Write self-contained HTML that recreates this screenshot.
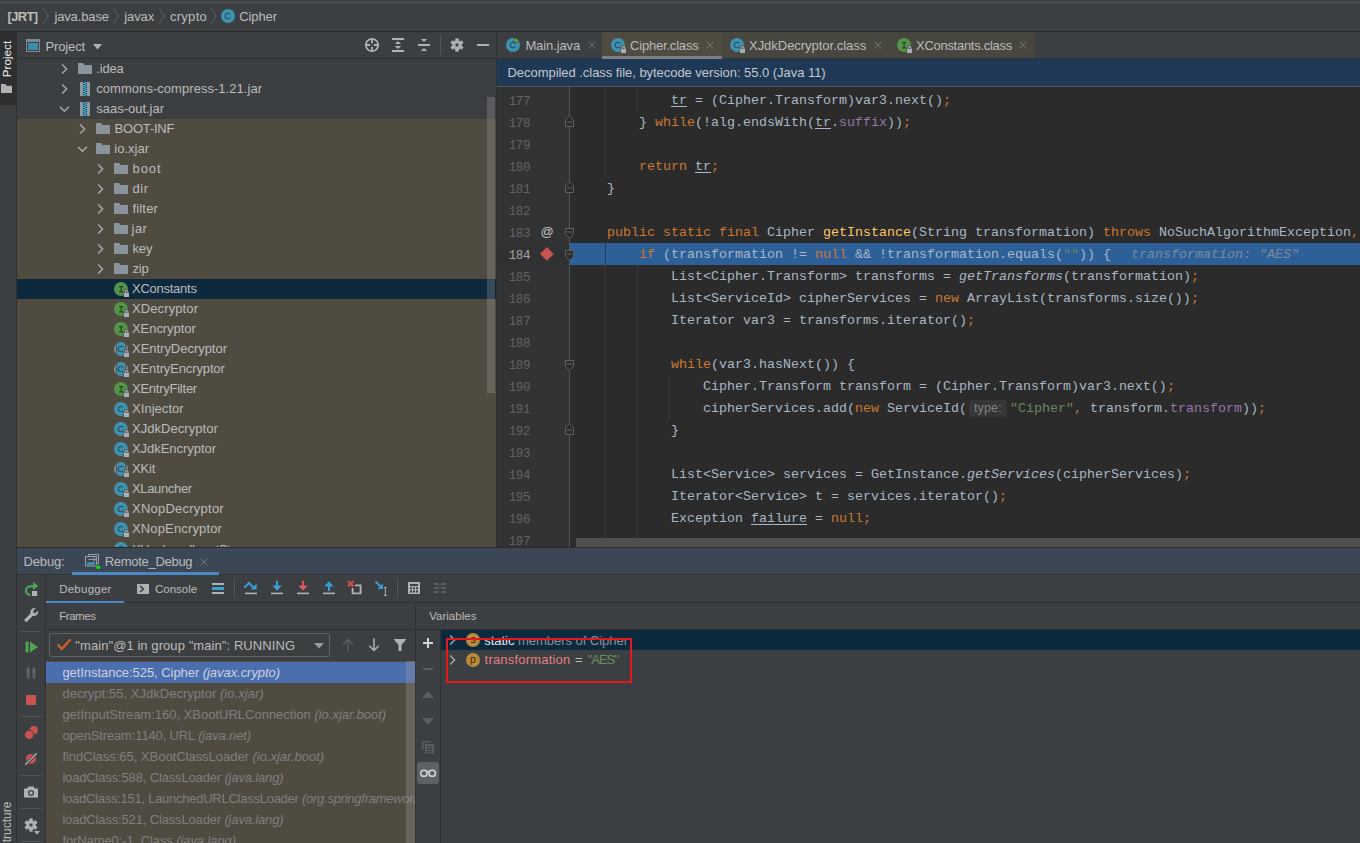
<!DOCTYPE html>
<html><head><meta charset="utf-8"><title>Cipher.class</title>
<style>
html,body{margin:0;padding:0;background:#3c3f41;}
body{width:1360px;height:843px;position:relative;overflow:hidden;font-family:"Liberation Sans",sans-serif;font-size:13px;color:#bbbbbb;}
.t{position:absolute;white-space:pre;}
.b{font-weight:bold;}
.i{font-style:italic;}
.m{font-family:"Liberation Mono",monospace;font-size:13.333px;}
.ab{position:absolute;}
svg{position:absolute;overflow:visible;}
.code{position:absolute;left:575px;white-space:pre;font-family:"Liberation Mono",monospace;font-size:13.333px;height:22px;line-height:22px;color:#a9b7c6;}
.k{color:#cc7832;}.f{color:#9876aa;}.s{color:#6a8759;}.d{color:#ffc66d;}.u{text-decoration:underline;text-underline-offset:2px;}
.ln{position:absolute;left:497px;width:33px;text-align:right;font-family:"Liberation Mono",monospace;font-size:12.5px;letter-spacing:-0.4px;height:22px;line-height:22px;color:#606366;}
.fr{color:#7f7f7f;}
.hint{display:inline-block;height:17px;line-height:17px;vertical-align:0px;margin:0 3px 0 2px;width:38px;text-align:center;border-radius:3px;background:#353637;color:#808284;font-family:"Liberation Sans",sans-serif;font-size:12.5px;letter-spacing:0.15px;}
</style></head><body>

<div style="position:absolute;left:0px;top:2px;width:1360px;height:1px;background:#555555;"></div>
<div style="position:absolute;left:0px;top:31px;width:1360px;height:1px;background:#2b2b2b;"></div>
<span id="t1" class="t b" style="left:7.5px;top:3px;height:28px;line-height:28px;letter-spacing:-0.630px;">[JRT]</span>
<span id="t2" class="t " style="left:54.4px;top:3px;height:28px;line-height:28px;letter-spacing:-0.132px;">java.base</span>
<span id="t3" class="t " style="left:124.3px;top:3px;height:28px;line-height:28px;letter-spacing:-0.115px;">javax</span>
<span id="t4" class="t " style="left:169.9px;top:3px;height:28px;line-height:28px;letter-spacing:0.299px;">crypto</span>
<span id="t5" class="t " style="left:239.3px;top:3px;height:28px;line-height:28px;letter-spacing:-0.119px;">Cipher</span>
<svg style="left:43px;top:8px" width="6" height="16" viewBox="0 0 6 16"><path d="M0.5 0.5L5.5 8L0.5 15.5" fill="none" stroke="#5e6163" stroke-width="1"/></svg>
<svg style="left:113px;top:8px" width="6" height="16" viewBox="0 0 6 16"><path d="M0.5 0.5L5.5 8L0.5 15.5" fill="none" stroke="#5e6163" stroke-width="1"/></svg>
<svg style="left:159px;top:8px" width="6" height="16" viewBox="0 0 6 16"><path d="M0.5 0.5L5.5 8L0.5 15.5" fill="none" stroke="#5e6163" stroke-width="1"/></svg>
<svg style="left:211px;top:8px" width="6" height="16" viewBox="0 0 6 16"><path d="M0.5 0.5L5.5 8L0.5 15.5" fill="none" stroke="#5e6163" stroke-width="1"/></svg>
<svg style="left:220px;top:8px" width="16" height="16" viewBox="0 0 16 16"><circle cx="8" cy="8" r="7" fill="#3f93b0"/><path d="M10.2 9.5a2.75 2.75 0 1 1 0-3" fill="none" stroke="#234a5a" stroke-width="1.15"/></svg>
<div style="position:absolute;left:0px;top:32px;width:16px;height:73px;background:#2d2f30;"></div>
<div style="position:absolute;left:16px;top:32px;width:1px;height:811px;background:#323232;"></div>
<span id="vproj" style="position:absolute;left:6.5px;top:59px;transform:translate(-50%,-50%) rotate(-90deg);white-space:pre;color:#f0f0f0;font-size:11.7px;line-height:16px;">Project</span>
<svg style="left:1px;top:84px" width="11" height="9" viewBox="0 0 11 9"><path d="M0 0h4.2l1.4 1.8h5.4v7.2h-11z" fill="#afb1b3"/></svg>
<span id="vstruct" style="position:absolute;left:7px;top:826px;transform:translate(-50%,-50%) rotate(-90deg);white-space:pre;color:#bbbbbb;font-size:12px;line-height:16px;">Structure</span>
<div style="position:absolute;left:17px;top:58px;width:479px;height:1px;background:#323232;"></div>
<svg style="left:26px;top:39px" width="14" height="13" viewBox="0 0 14 13"><rect x="0.5" y="0.5" width="13" height="12" fill="none" stroke="#7f8b91" stroke-width="1"/><rect x="0" y="0" width="14" height="3" fill="#7f8b91"/><rect x="2" y="4" width="10" height="7" fill="#3a8fae"/></svg>
<span id="t6" class="t " style="left:45.5px;top:33.5px;height:26px;line-height:26px;letter-spacing:-0.128px;">Project</span>
<svg style="left:93px;top:43.5px" width="9" height="6" viewBox="0 0 9 6"><path d="M0 0h9l-4.5 5.5z" fill="#afb1b3"/></svg>
<svg style="left:364px;top:37px" width="16" height="16" viewBox="0 0 16 16"><circle cx="8" cy="8" r="6.2" fill="none" stroke="#afb1b3" stroke-width="1.7"/><path d="M8 1.5v4.7M8 9.8v4.7M1.5 8h4.7M9.8 8h4.7" stroke="#afb1b3" stroke-width="1.8"/></svg>
<svg style="left:390px;top:37px" width="16" height="16" viewBox="0 0 16 16"><path d="M2 1h12v2h-12zM2 13h12v2h-12z" fill="#afb1b3"/><path d="M8 4l3.2 2.9h-6.4zM8 12l3.2-2.9h-6.4z" fill="#afb1b3"/></svg>
<svg style="left:416px;top:37px" width="16" height="16" viewBox="0 0 16 16"><path d="M2 7h12v2h-12z" fill="#afb1b3"/><path d="M8 5l3.2-3h-6.4zM8 11l3.2 3h-6.4z" fill="#afb1b3"/></svg>
<div style="position:absolute;left:440px;top:35px;width:1px;height:20px;background:#555555;"></div>
<svg style="left:449px;top:37px" width="16" height="16" viewBox="0 0 16 16"><path d="M6.38 3.69L6.71 1.63L9.29 1.63L9.62 3.69L10.92 4.44L12.87 3.70L14.16 5.93L12.54 7.25L12.54 8.75L14.16 10.07L12.87 12.30L10.92 11.56L9.62 12.31L9.29 14.37L6.71 14.37L6.38 12.31L5.08 11.56L3.13 12.30L1.84 10.07L3.46 8.75L3.46 7.25L1.84 5.93L3.13 3.70L5.08 4.44Z M8 6.1a1.9 1.9 0 1 0 0 3.8a1.9 1.9 0 1 0 0-3.8z" fill="#afb1b3" fill-rule="evenodd" stroke="#afb1b3" stroke-width="0.6" stroke-linejoin="round"/></svg>
<div style="position:absolute;left:477px;top:44px;width:12px;height:2px;background:#afb1b3;"></div>
<div style="position:absolute;left:17px;top:119px;width:479px;height:428px;background:#4f4b41;"></div>
<div style="position:absolute;left:17px;top:279px;width:479px;height:20px;background:#0d293e;"></div>
<div style="position:absolute;left:487px;top:97px;width:8px;height:296px;background:rgba(166,166,166,0.28);"></div>
<div class="ab" style="left:17px;top:59px;width:479px;height:488px;overflow:hidden;">
<svg style="left:43px;top:3.5px" width="8" height="12" viewBox="0 0 8 12"><path d="M2.2 1.5L6.6 6L2.2 10.5" fill="none" stroke="#a7abae" stroke-width="1.4"/></svg>
<svg style="left:61px;top:4px" width="14" height="11" viewBox="0 0 14 11"><path d="M0 0h5.2l1.3 2h7.5v9h-14z" fill="#8a949c"/></svg>
<span id="t7" class="t " style="left:79.3px;top:0px;height:20px;line-height:20px;letter-spacing:-0.201px;">.idea</span>
<svg style="left:43px;top:23.5px" width="8" height="12" viewBox="0 0 8 12"><path d="M2.2 1.5L6.6 6L2.2 10.5" fill="none" stroke="#a7abae" stroke-width="1.4"/></svg>
<svg style="left:63px;top:23px" width="10" height="14" viewBox="0 0 10 14"><rect x="0" y="0" width="3" height="14" fill="#8e989f"/><rect x="7" y="0" width="3" height="14" fill="#8e989f"/><rect x="3" y="0" width="4" height="14" fill="#35373a"/><rect x="4.4" y="0" width="2.6" height="1" fill="#37a8d4"/><rect x="3" y="1" width="2.6" height="1" fill="#37a8d4"/><rect x="4.4" y="2" width="2.6" height="1" fill="#37a8d4"/><rect x="3" y="3" width="2.6" height="1" fill="#37a8d4"/><rect x="4.4" y="4" width="2.6" height="1" fill="#37a8d4"/><rect x="3" y="5" width="2.6" height="1" fill="#37a8d4"/><rect x="4.4" y="6" width="2.6" height="1" fill="#37a8d4"/><rect x="3" y="7" width="2.6" height="1" fill="#37a8d4"/><rect x="4.4" y="8" width="2.6" height="1" fill="#37a8d4"/><rect x="3" y="9" width="2.6" height="1" fill="#37a8d4"/><rect x="4.4" y="10" width="2.6" height="1" fill="#37a8d4"/><rect x="3" y="11" width="2.6" height="1" fill="#37a8d4"/><rect x="4.4" y="12" width="2.6" height="1" fill="#37a8d4"/><rect x="3" y="13" width="2.6" height="1" fill="#37a8d4"/></svg>
<span id="t8" class="t " style="left:79.3px;top:20px;height:20px;line-height:20px;letter-spacing:0.041px;">commons-compress-1.21.jar</span>
<svg style="left:41px;top:45.5px" width="12" height="8" viewBox="0 0 12 8"><path d="M1.9 1.7L6.4 6.2L10.9 1.7" fill="none" stroke="#a7abae" stroke-width="1.4"/></svg>
<svg style="left:63px;top:43px" width="10" height="14" viewBox="0 0 10 14"><rect x="0" y="0" width="3" height="14" fill="#8e989f"/><rect x="7" y="0" width="3" height="14" fill="#8e989f"/><rect x="3" y="0" width="4" height="14" fill="#35373a"/><rect x="4.4" y="0" width="2.6" height="1" fill="#37a8d4"/><rect x="3" y="1" width="2.6" height="1" fill="#37a8d4"/><rect x="4.4" y="2" width="2.6" height="1" fill="#37a8d4"/><rect x="3" y="3" width="2.6" height="1" fill="#37a8d4"/><rect x="4.4" y="4" width="2.6" height="1" fill="#37a8d4"/><rect x="3" y="5" width="2.6" height="1" fill="#37a8d4"/><rect x="4.4" y="6" width="2.6" height="1" fill="#37a8d4"/><rect x="3" y="7" width="2.6" height="1" fill="#37a8d4"/><rect x="4.4" y="8" width="2.6" height="1" fill="#37a8d4"/><rect x="3" y="9" width="2.6" height="1" fill="#37a8d4"/><rect x="4.4" y="10" width="2.6" height="1" fill="#37a8d4"/><rect x="3" y="11" width="2.6" height="1" fill="#37a8d4"/><rect x="4.4" y="12" width="2.6" height="1" fill="#37a8d4"/><rect x="3" y="13" width="2.6" height="1" fill="#37a8d4"/></svg>
<span id="t9" class="t " style="left:79.3px;top:40px;height:20px;line-height:20px;letter-spacing:-0.020px;">saas-out.jar</span>
<svg style="left:61px;top:63.5px" width="8" height="12" viewBox="0 0 8 12"><path d="M2.2 1.5L6.6 6L2.2 10.5" fill="none" stroke="#a7abae" stroke-width="1.4"/></svg>
<svg style="left:79px;top:64px" width="14" height="11" viewBox="0 0 14 11"><path d="M0 0h5.2l1.3 2h7.5v9h-14z" fill="#8a949c"/></svg>
<span id="t10" class="t " style="left:97.5px;top:60px;height:20px;line-height:20px;letter-spacing:-0.199px;">BOOT-INF</span>
<svg style="left:59px;top:85.5px" width="12" height="8" viewBox="0 0 12 8"><path d="M1.9 1.7L6.4 6.2L10.9 1.7" fill="none" stroke="#a7abae" stroke-width="1.4"/></svg>
<svg style="left:79px;top:84px" width="14" height="11" viewBox="0 0 14 11"><path d="M0 0h5.2l1.3 2h7.5v9h-14z" fill="#8a949c"/></svg>
<span id="t11" class="t " style="left:97.3px;top:80px;height:20px;line-height:20px;letter-spacing:0.019px;">io.xjar</span>
<svg style="left:79px;top:103.5px" width="8" height="12" viewBox="0 0 8 12"><path d="M2.2 1.5L6.6 6L2.2 10.5" fill="none" stroke="#a7abae" stroke-width="1.4"/></svg>
<svg style="left:97px;top:104px" width="14" height="11" viewBox="0 0 14 11"><path d="M0 0h5.2l1.3 2h7.5v9h-14z" fill="#8a949c"/></svg>
<span id="t12" class="t " style="left:115.5px;top:100px;height:20px;line-height:20px;letter-spacing:0.896px;">boot</span>
<svg style="left:79px;top:123.5px" width="8" height="12" viewBox="0 0 8 12"><path d="M2.2 1.5L6.6 6L2.2 10.5" fill="none" stroke="#a7abae" stroke-width="1.4"/></svg>
<svg style="left:97px;top:124px" width="14" height="11" viewBox="0 0 14 11"><path d="M0 0h5.2l1.3 2h7.5v9h-14z" fill="#8a949c"/></svg>
<span id="t13" class="t " style="left:115.4px;top:120px;height:20px;line-height:20px;letter-spacing:0.573px;">dir</span>
<svg style="left:79px;top:143.5px" width="8" height="12" viewBox="0 0 8 12"><path d="M2.2 1.5L6.6 6L2.2 10.5" fill="none" stroke="#a7abae" stroke-width="1.4"/></svg>
<svg style="left:97px;top:144px" width="14" height="11" viewBox="0 0 14 11"><path d="M0 0h5.2l1.3 2h7.5v9h-14z" fill="#8a949c"/></svg>
<span id="t14" class="t " style="left:115.4px;top:140px;height:20px;line-height:20px;letter-spacing:0.188px;">filter</span>
<svg style="left:79px;top:163.5px" width="8" height="12" viewBox="0 0 8 12"><path d="M2.2 1.5L6.6 6L2.2 10.5" fill="none" stroke="#a7abae" stroke-width="1.4"/></svg>
<svg style="left:97px;top:164px" width="14" height="11" viewBox="0 0 14 11"><path d="M0 0h5.2l1.3 2h7.5v9h-14z" fill="#8a949c"/></svg>
<span id="t15" class="t " style="left:114.6px;top:160px;height:20px;line-height:20px;letter-spacing:0.423px;">jar</span>
<svg style="left:79px;top:183.5px" width="8" height="12" viewBox="0 0 8 12"><path d="M2.2 1.5L6.6 6L2.2 10.5" fill="none" stroke="#a7abae" stroke-width="1.4"/></svg>
<svg style="left:97px;top:184px" width="14" height="11" viewBox="0 0 14 11"><path d="M0 0h5.2l1.3 2h7.5v9h-14z" fill="#8a949c"/></svg>
<span id="t16" class="t " style="left:115.4px;top:180px;height:20px;line-height:20px;letter-spacing:-0.117px;">key</span>
<svg style="left:79px;top:203.5px" width="8" height="12" viewBox="0 0 8 12"><path d="M2.2 1.5L6.6 6L2.2 10.5" fill="none" stroke="#a7abae" stroke-width="1.4"/></svg>
<svg style="left:97px;top:204px" width="14" height="11" viewBox="0 0 14 11"><path d="M0 0h5.2l1.3 2h7.5v9h-14z" fill="#8a949c"/></svg>
<span id="t17" class="t " style="left:115.4px;top:200px;height:20px;line-height:20px;letter-spacing:-0.162px;">zip</span>
<svg style="left:96px;top:222px" width="16" height="16" viewBox="0 0 16 16"><circle cx="8" cy="8" r="7" fill="#53934a"/><path d="M6 5.7h4.2M6 10.9h4.2M8.1 5.7v5.2" fill="none" stroke="#27461f" stroke-width="1.2"/><defs><clipPath id="lk1"><circle cx="8" cy="8" r="7"/></clipPath></defs><g clip-path="url(#lk1)"><path d="M12.1 12.4v-1.4a1.4 1.4 0 0 1 2.8 0v1.4" fill="none" stroke="#4b483f" stroke-width="2.6"/><rect x="10.3" y="11.3" width="6.4" height="5.4" fill="#4b483f"/></g><path d="M12.1 12v-1a1.4 1.4 0 0 1 2.8 0v1" fill="none" stroke="#a7b0b8" stroke-width="1.1"/><rect x="11" y="12" width="5" height="4" fill="#a7b0b8"/></svg>
<span id="t18" class="t " style="left:115px;top:220px;height:20px;line-height:20px;letter-spacing:-0.256px;">XConstants</span>
<svg style="left:96px;top:242px" width="16" height="16" viewBox="0 0 16 16"><circle cx="8" cy="8" r="7" fill="#53934a"/><path d="M6 5.7h4.2M6 10.9h4.2M8.1 5.7v5.2" fill="none" stroke="#27461f" stroke-width="1.2"/><defs><clipPath id="lk2"><circle cx="8" cy="8" r="7"/></clipPath></defs><g clip-path="url(#lk2)"><path d="M12.1 12.4v-1.4a1.4 1.4 0 0 1 2.8 0v1.4" fill="none" stroke="#4b483f" stroke-width="2.6"/><rect x="10.3" y="11.3" width="6.4" height="5.4" fill="#4b483f"/></g><path d="M12.1 12v-1a1.4 1.4 0 0 1 2.8 0v1" fill="none" stroke="#a7b0b8" stroke-width="1.1"/><rect x="11" y="12" width="5" height="4" fill="#a7b0b8"/></svg>
<span id="t19" class="t " style="left:115px;top:240px;height:20px;line-height:20px;letter-spacing:0.108px;">XDecryptor</span>
<svg style="left:96px;top:262px" width="16" height="16" viewBox="0 0 16 16"><circle cx="8" cy="8" r="7" fill="#53934a"/><path d="M6 5.7h4.2M6 10.9h4.2M8.1 5.7v5.2" fill="none" stroke="#27461f" stroke-width="1.2"/><defs><clipPath id="lk3"><circle cx="8" cy="8" r="7"/></clipPath></defs><g clip-path="url(#lk3)"><path d="M12.1 12.4v-1.4a1.4 1.4 0 0 1 2.8 0v1.4" fill="none" stroke="#4b483f" stroke-width="2.6"/><rect x="10.3" y="11.3" width="6.4" height="5.4" fill="#4b483f"/></g><path d="M12.1 12v-1a1.4 1.4 0 0 1 2.8 0v1" fill="none" stroke="#a7b0b8" stroke-width="1.1"/><rect x="11" y="12" width="5" height="4" fill="#a7b0b8"/></svg>
<span id="t20" class="t " style="left:115px;top:260px;height:20px;line-height:20px;letter-spacing:-0.057px;">XEncryptor</span>
<svg style="left:96px;top:282px" width="16" height="16" viewBox="0 0 16 16"><defs><clipPath id="ac10690"><rect x="3.8" y="0" width="8.5" height="16"/></clipPath><clipPath id="al10690"><rect x="0" y="0" width="2.7" height="16"/></clipPath><clipPath id="ar10690"><rect x="13.4" y="0" width="2.6" height="16"/></clipPath></defs><circle cx="8" cy="8" r="7" fill="#3f93b0" clip-path="url(#ac10690)"/><circle cx="8" cy="8" r="7" fill="#8f9aa0" clip-path="url(#al10690)"/><circle cx="8" cy="8" r="7" fill="#8f9aa0" clip-path="url(#ar10690)"/><path d="M10.2 9.5a2.75 2.75 0 1 1 0-3" fill="none" stroke="#234a5a" stroke-width="1.15"/><defs><clipPath id="lk4"><circle cx="8" cy="8" r="7"/></clipPath></defs><g clip-path="url(#lk4)"><path d="M12.1 12.4v-1.4a1.4 1.4 0 0 1 2.8 0v1.4" fill="none" stroke="#4b483f" stroke-width="2.6"/><rect x="10.3" y="11.3" width="6.4" height="5.4" fill="#4b483f"/></g><path d="M12.1 12v-1a1.4 1.4 0 0 1 2.8 0v1" fill="none" stroke="#a7b0b8" stroke-width="1.1"/><rect x="11" y="12" width="5" height="4" fill="#a7b0b8"/></svg>
<span id="t21" class="t " style="left:115px;top:280px;height:20px;line-height:20px;letter-spacing:-0.027px;">XEntryDecryptor</span>
<svg style="left:96px;top:302px" width="16" height="16" viewBox="0 0 16 16"><defs><clipPath id="ac10710"><rect x="3.8" y="0" width="8.5" height="16"/></clipPath><clipPath id="al10710"><rect x="0" y="0" width="2.7" height="16"/></clipPath><clipPath id="ar10710"><rect x="13.4" y="0" width="2.6" height="16"/></clipPath></defs><circle cx="8" cy="8" r="7" fill="#3f93b0" clip-path="url(#ac10710)"/><circle cx="8" cy="8" r="7" fill="#8f9aa0" clip-path="url(#al10710)"/><circle cx="8" cy="8" r="7" fill="#8f9aa0" clip-path="url(#ar10710)"/><path d="M10.2 9.5a2.75 2.75 0 1 1 0-3" fill="none" stroke="#234a5a" stroke-width="1.15"/><defs><clipPath id="lk5"><circle cx="8" cy="8" r="7"/></clipPath></defs><g clip-path="url(#lk5)"><path d="M12.1 12.4v-1.4a1.4 1.4 0 0 1 2.8 0v1.4" fill="none" stroke="#4b483f" stroke-width="2.6"/><rect x="10.3" y="11.3" width="6.4" height="5.4" fill="#4b483f"/></g><path d="M12.1 12v-1a1.4 1.4 0 0 1 2.8 0v1" fill="none" stroke="#a7b0b8" stroke-width="1.1"/><rect x="11" y="12" width="5" height="4" fill="#a7b0b8"/></svg>
<span id="t22" class="t " style="left:115px;top:300px;height:20px;line-height:20px;letter-spacing:-0.133px;">XEntryEncryptor</span>
<svg style="left:96px;top:322px" width="16" height="16" viewBox="0 0 16 16"><circle cx="8" cy="8" r="7" fill="#53934a"/><path d="M6 5.7h4.2M6 10.9h4.2M8.1 5.7v5.2" fill="none" stroke="#27461f" stroke-width="1.2"/><defs><clipPath id="lk6"><circle cx="8" cy="8" r="7"/></clipPath></defs><g clip-path="url(#lk6)"><path d="M12.1 12.4v-1.4a1.4 1.4 0 0 1 2.8 0v1.4" fill="none" stroke="#4b483f" stroke-width="2.6"/><rect x="10.3" y="11.3" width="6.4" height="5.4" fill="#4b483f"/></g><path d="M12.1 12v-1a1.4 1.4 0 0 1 2.8 0v1" fill="none" stroke="#a7b0b8" stroke-width="1.1"/><rect x="11" y="12" width="5" height="4" fill="#a7b0b8"/></svg>
<span id="t23" class="t " style="left:115px;top:320px;height:20px;line-height:20px;letter-spacing:-0.246px;">XEntryFilter</span>
<svg style="left:96px;top:342px" width="16" height="16" viewBox="0 0 16 16"><circle cx="8" cy="8" r="7" fill="#3f93b0"/><path d="M10.2 9.5a2.75 2.75 0 1 1 0-3" fill="none" stroke="#234a5a" stroke-width="1.15"/><defs><clipPath id="lk7"><circle cx="8" cy="8" r="7"/></clipPath></defs><g clip-path="url(#lk7)"><path d="M12.1 12.4v-1.4a1.4 1.4 0 0 1 2.8 0v1.4" fill="none" stroke="#4b483f" stroke-width="2.6"/><rect x="10.3" y="11.3" width="6.4" height="5.4" fill="#4b483f"/></g><path d="M12.1 12v-1a1.4 1.4 0 0 1 2.8 0v1" fill="none" stroke="#a7b0b8" stroke-width="1.1"/><rect x="11" y="12" width="5" height="4" fill="#a7b0b8"/></svg>
<span id="t24" class="t " style="left:115px;top:340px;height:20px;line-height:20px;letter-spacing:0.048px;">XInjector</span>
<svg style="left:96px;top:362px" width="16" height="16" viewBox="0 0 16 16"><circle cx="8" cy="8" r="7" fill="#3f93b0"/><path d="M10.2 9.5a2.75 2.75 0 1 1 0-3" fill="none" stroke="#234a5a" stroke-width="1.15"/><defs><clipPath id="lk8"><circle cx="8" cy="8" r="7"/></clipPath></defs><g clip-path="url(#lk8)"><path d="M12.1 12.4v-1.4a1.4 1.4 0 0 1 2.8 0v1.4" fill="none" stroke="#4b483f" stroke-width="2.6"/><rect x="10.3" y="11.3" width="6.4" height="5.4" fill="#4b483f"/></g><path d="M12.1 12v-1a1.4 1.4 0 0 1 2.8 0v1" fill="none" stroke="#a7b0b8" stroke-width="1.1"/><rect x="11" y="12" width="5" height="4" fill="#a7b0b8"/></svg>
<span id="t25" class="t " style="left:115px;top:360px;height:20px;line-height:20px;letter-spacing:0.046px;">XJdkDecryptor</span>
<svg style="left:96px;top:382px" width="16" height="16" viewBox="0 0 16 16"><circle cx="8" cy="8" r="7" fill="#3f93b0"/><path d="M10.2 9.5a2.75 2.75 0 1 1 0-3" fill="none" stroke="#234a5a" stroke-width="1.15"/><defs><clipPath id="lk9"><circle cx="8" cy="8" r="7"/></clipPath></defs><g clip-path="url(#lk9)"><path d="M12.1 12.4v-1.4a1.4 1.4 0 0 1 2.8 0v1.4" fill="none" stroke="#4b483f" stroke-width="2.6"/><rect x="10.3" y="11.3" width="6.4" height="5.4" fill="#4b483f"/></g><path d="M12.1 12v-1a1.4 1.4 0 0 1 2.8 0v1" fill="none" stroke="#a7b0b8" stroke-width="1.1"/><rect x="11" y="12" width="5" height="4" fill="#a7b0b8"/></svg>
<span id="t26" class="t " style="left:115px;top:380px;height:20px;line-height:20px;letter-spacing:-0.046px;">XJdkEncryptor</span>
<svg style="left:96px;top:402px" width="16" height="16" viewBox="0 0 16 16"><defs><clipPath id="ac10810"><rect x="3.8" y="0" width="8.5" height="16"/></clipPath><clipPath id="al10810"><rect x="0" y="0" width="2.7" height="16"/></clipPath><clipPath id="ar10810"><rect x="13.4" y="0" width="2.6" height="16"/></clipPath></defs><circle cx="8" cy="8" r="7" fill="#3f93b0" clip-path="url(#ac10810)"/><circle cx="8" cy="8" r="7" fill="#8f9aa0" clip-path="url(#al10810)"/><circle cx="8" cy="8" r="7" fill="#8f9aa0" clip-path="url(#ar10810)"/><path d="M10.2 9.5a2.75 2.75 0 1 1 0-3" fill="none" stroke="#234a5a" stroke-width="1.15"/><defs><clipPath id="lk10"><circle cx="8" cy="8" r="7"/></clipPath></defs><g clip-path="url(#lk10)"><path d="M12.1 12.4v-1.4a1.4 1.4 0 0 1 2.8 0v1.4" fill="none" stroke="#4b483f" stroke-width="2.6"/><rect x="10.3" y="11.3" width="6.4" height="5.4" fill="#4b483f"/></g><path d="M12.1 12v-1a1.4 1.4 0 0 1 2.8 0v1" fill="none" stroke="#a7b0b8" stroke-width="1.1"/><rect x="11" y="12" width="5" height="4" fill="#a7b0b8"/></svg>
<span id="t27" class="t " style="left:115px;top:400px;height:20px;line-height:20px;letter-spacing:-0.181px;">XKit</span>
<svg style="left:96px;top:422px" width="16" height="16" viewBox="0 0 16 16"><circle cx="8" cy="8" r="7" fill="#3f93b0"/><path d="M10.2 9.5a2.75 2.75 0 1 1 0-3" fill="none" stroke="#234a5a" stroke-width="1.15"/><defs><clipPath id="lk11"><circle cx="8" cy="8" r="7"/></clipPath></defs><g clip-path="url(#lk11)"><path d="M12.1 12.4v-1.4a1.4 1.4 0 0 1 2.8 0v1.4" fill="none" stroke="#4b483f" stroke-width="2.6"/><rect x="10.3" y="11.3" width="6.4" height="5.4" fill="#4b483f"/></g><path d="M12.1 12v-1a1.4 1.4 0 0 1 2.8 0v1" fill="none" stroke="#a7b0b8" stroke-width="1.1"/><rect x="11" y="12" width="5" height="4" fill="#a7b0b8"/></svg>
<span id="t28" class="t " style="left:115px;top:420px;height:20px;line-height:20px;letter-spacing:-0.349px;">XLauncher</span>
<svg style="left:96px;top:442px" width="16" height="16" viewBox="0 0 16 16"><circle cx="8" cy="8" r="7" fill="#3f93b0"/><path d="M10.2 9.5a2.75 2.75 0 1 1 0-3" fill="none" stroke="#234a5a" stroke-width="1.15"/><defs><clipPath id="lk12"><circle cx="8" cy="8" r="7"/></clipPath></defs><g clip-path="url(#lk12)"><path d="M12.1 12.4v-1.4a1.4 1.4 0 0 1 2.8 0v1.4" fill="none" stroke="#4b483f" stroke-width="2.6"/><rect x="10.3" y="11.3" width="6.4" height="5.4" fill="#4b483f"/></g><path d="M12.1 12v-1a1.4 1.4 0 0 1 2.8 0v1" fill="none" stroke="#a7b0b8" stroke-width="1.1"/><rect x="11" y="12" width="5" height="4" fill="#a7b0b8"/></svg>
<span id="t29" class="t " style="left:115px;top:440px;height:20px;line-height:20px;letter-spacing:0.235px;">XNopDecryptor</span>
<svg style="left:96px;top:462px" width="16" height="16" viewBox="0 0 16 16"><circle cx="8" cy="8" r="7" fill="#3f93b0"/><path d="M10.2 9.5a2.75 2.75 0 1 1 0-3" fill="none" stroke="#234a5a" stroke-width="1.15"/><defs><clipPath id="lk13"><circle cx="8" cy="8" r="7"/></clipPath></defs><g clip-path="url(#lk13)"><path d="M12.1 12.4v-1.4a1.4 1.4 0 0 1 2.8 0v1.4" fill="none" stroke="#4b483f" stroke-width="2.6"/><rect x="10.3" y="11.3" width="6.4" height="5.4" fill="#4b483f"/></g><path d="M12.1 12v-1a1.4 1.4 0 0 1 2.8 0v1" fill="none" stroke="#a7b0b8" stroke-width="1.1"/><rect x="11" y="12" width="5" height="4" fill="#a7b0b8"/></svg>
<span id="t30" class="t " style="left:115px;top:460px;height:20px;line-height:20px;letter-spacing:0.145px;">XNopEncryptor</span>
<svg style="left:96px;top:482px" width="16" height="16" viewBox="0 0 16 16"><circle cx="8" cy="8" r="7" fill="#3f93b0"/><path d="M10.2 9.5a2.75 2.75 0 1 1 0-3" fill="none" stroke="#234a5a" stroke-width="1.15"/><defs><clipPath id="lk14"><circle cx="8" cy="8" r="7"/></clipPath></defs><g clip-path="url(#lk14)"><path d="M12.1 12.4v-1.4a1.4 1.4 0 0 1 2.8 0v1.4" fill="none" stroke="#4b483f" stroke-width="2.6"/><rect x="10.3" y="11.3" width="6.4" height="5.4" fill="#4b483f"/></g><path d="M12.1 12v-1a1.4 1.4 0 0 1 2.8 0v1" fill="none" stroke="#a7b0b8" stroke-width="1.1"/><rect x="11" y="12" width="5" height="4" fill="#a7b0b8"/></svg>
<span id="t31" class="t " style="left:115px;top:481px;height:20px;line-height:20px;letter-spacing:-0.341px;">XUnclosedInputStream</span>
</div>
<div style="position:absolute;left:496px;top:32px;width:1px;height:515px;background:#303132;"></div>
<div style="position:absolute;left:497px;top:58px;width:863px;height:1px;background:#323232;"></div>
<div style="position:absolute;left:602px;top:32px;width:120px;height:27px;background:#4f4b41;"></div>
<div style="position:absolute;left:722px;top:32px;width:168px;height:26px;background:#47463f;"></div>
<div style="position:absolute;left:890px;top:32px;width:145px;height:26px;background:#47463f;"></div>
<div style="position:absolute;left:602px;top:56px;width:120px;height:3px;background:#7c8084;"></div>
<svg style="left:505px;top:37px" width="16" height="16" viewBox="0 0 16 16"><circle cx="8" cy="8" r="7" fill="#3f93b0"/><path d="M10.2 9.5a2.75 2.75 0 1 1 0-3" fill="none" stroke="#234a5a" stroke-width="1.15"/><path d="M9.2 0.2v6.4l5.4-3.2z" fill="#56b33e" stroke="#3c3f41" stroke-width="0.8"/></svg>
<span id="t32" class="t " style="left:525.4px;top:33px;height:26px;line-height:26px;letter-spacing:-0.105px;">Main.java</span>
<svg style="left:588px;top:41px" width="8" height="8" viewBox="0 0 8 8"><path d="M0.5 0.5L7.5 7.5M7.5 0.5L0.5 7.5" stroke="#6e7376" stroke-width="1"/></svg>
<svg style="left:610px;top:37px" width="16" height="16" viewBox="0 0 16 16"><circle cx="8" cy="8" r="7" fill="#3f93b0"/><path d="M10.2 9.5a2.75 2.75 0 1 1 0-3" fill="none" stroke="#234a5a" stroke-width="1.15"/><defs><clipPath id="lk15"><circle cx="8" cy="8" r="7"/></clipPath></defs><g clip-path="url(#lk15)"><path d="M12.1 12.4v-1.4a1.4 1.4 0 0 1 2.8 0v1.4" fill="none" stroke="#4b483f" stroke-width="2.6"/><rect x="10.3" y="11.3" width="6.4" height="5.4" fill="#4b483f"/></g><path d="M12.1 12v-1a1.4 1.4 0 0 1 2.8 0v1" fill="none" stroke="#a7b0b8" stroke-width="1.1"/><rect x="11" y="12" width="5" height="4" fill="#a7b0b8"/></svg>
<span id="t33" class="t " style="left:630px;top:33px;height:26px;line-height:26px;letter-spacing:-0.192px;">Cipher.class</span>
<svg style="left:706px;top:41px" width="8" height="8" viewBox="0 0 8 8"><path d="M0.5 0.5L7.5 7.5M7.5 0.5L0.5 7.5" stroke="#6e7376" stroke-width="1"/></svg>
<svg style="left:729px;top:37px" width="16" height="16" viewBox="0 0 16 16"><circle cx="8" cy="8" r="7" fill="#3f93b0"/><path d="M10.2 9.5a2.75 2.75 0 1 1 0-3" fill="none" stroke="#234a5a" stroke-width="1.15"/><defs><clipPath id="lk16"><circle cx="8" cy="8" r="7"/></clipPath></defs><g clip-path="url(#lk16)"><path d="M12.1 12.4v-1.4a1.4 1.4 0 0 1 2.8 0v1.4" fill="none" stroke="#4b483f" stroke-width="2.6"/><rect x="10.3" y="11.3" width="6.4" height="5.4" fill="#4b483f"/></g><path d="M12.1 12v-1a1.4 1.4 0 0 1 2.8 0v1" fill="none" stroke="#a7b0b8" stroke-width="1.1"/><rect x="11" y="12" width="5" height="4" fill="#a7b0b8"/></svg>
<span id="t34" class="t " style="left:749px;top:33px;height:26px;line-height:26px;letter-spacing:-0.031px;">XJdkDecryptor.class</span>
<svg style="left:873.5px;top:41px" width="8" height="8" viewBox="0 0 8 8"><path d="M0.5 0.5L7.5 7.5M7.5 0.5L0.5 7.5" stroke="#6e7376" stroke-width="1"/></svg>
<svg style="left:896px;top:37px" width="16" height="16" viewBox="0 0 16 16"><circle cx="8" cy="8" r="7" fill="#53934a"/><path d="M6 5.7h4.2M6 10.9h4.2M8.1 5.7v5.2" fill="none" stroke="#27461f" stroke-width="1.2"/><defs><clipPath id="lk17"><circle cx="8" cy="8" r="7"/></clipPath></defs><g clip-path="url(#lk17)"><path d="M12.1 12.4v-1.4a1.4 1.4 0 0 1 2.8 0v1.4" fill="none" stroke="#4b483f" stroke-width="2.6"/><rect x="10.3" y="11.3" width="6.4" height="5.4" fill="#4b483f"/></g><path d="M12.1 12v-1a1.4 1.4 0 0 1 2.8 0v1" fill="none" stroke="#a7b0b8" stroke-width="1.1"/><rect x="11" y="12" width="5" height="4" fill="#a7b0b8"/></svg>
<span id="t35" class="t " style="left:916px;top:33px;height:26px;line-height:26px;letter-spacing:-0.282px;">XConstants.class</span>
<svg style="left:1019px;top:41px" width="8" height="8" viewBox="0 0 8 8"><path d="M0.5 0.5L7.5 7.5M7.5 0.5L0.5 7.5" stroke="#6e7376" stroke-width="1"/></svg>
<div style="position:absolute;left:497px;top:59px;width:863px;height:27px;background:#1e3856;"></div>
<div style="position:absolute;left:497px;top:86px;width:863px;height:1px;background:#595959;"></div>
<span id="t36" class="t " style="left:507.5px;top:59.5px;height:26px;line-height:26px;letter-spacing:-0.044px;color:#c3c8cc;">Decompiled .class file, bytecode version: 55.0 (Java 11)</span>
<div class="ab" style="left:497px;top:87px;width:863px;height:460px;background:#2b2b2b;overflow:hidden;">
<div style="position:absolute;left:0px;top:0px;width:72px;height:460px;background:#313335;"></div>
<div style="position:absolute;left:0px;top:156px;width:72px;height:22px;background:#2f3133;"></div>
<div style="position:absolute;left:72px;top:0px;width:1px;height:460px;background:#555555;"></div>
<div style="position:absolute;left:73px;top:156px;width:790px;height:22px;background:#2d6099;"></div>
<div style="position:absolute;left:108px;top:2px;width:1px;height:88px;background:#393939;"></div>
<div style="position:absolute;left:140px;top:2px;width:1px;height:22px;background:#393939;"></div>
<div style="position:absolute;left:108px;top:156px;width:1px;height:308px;background:#393939;"></div>
<div style="position:absolute;left:140px;top:178px;width:1px;height:286px;background:#393939;"></div>
<div style="position:absolute;left:172px;top:288px;width:1px;height:44px;background:#393939;"></div>
<div style="position:absolute;left:108px;top:156px;width:1px;height:22px;background:#263a55;"></div>
<div class="ln" style="left:0;top:4px;color:#606366;">177</div>
<div class="code" style="left:78px;top:3px;">            <span class="u">tr</span> = (Cipher.Transform)var3.next()<span class="k">;</span></div>
<div class="ln" style="left:0;top:26px;color:#606366;">178</div>
<div class="code" style="left:78px;top:25px;">        } <span class="k">while</span>(!alg.endsWith(<span class="u">tr</span>.<span class="f">suffix</span>))<span class="k">;</span></div>
<div class="ln" style="left:0;top:48px;color:#606366;">179</div>
<div class="ln" style="left:0;top:70px;color:#606366;">180</div>
<div class="code" style="left:78px;top:69px;">        <span class="k">return </span><span class="u">tr</span><span class="k">;</span></div>
<div class="ln" style="left:0;top:92px;color:#606366;">181</div>
<div class="code" style="left:78px;top:91px;">    }</div>
<div class="ln" style="left:0;top:114px;color:#606366;">182</div>
<div class="ln" style="left:0;top:136px;color:#606366;">183</div>
<div class="code" style="left:78px;top:135px;">    <span class="k">public static final </span>Cipher <span class="d">getInstance</span>(String transformation) <span class="k">throws </span>NoSuchAlgorithmException<span class="k">,</span></div>
<div class="ln" style="left:0;top:158px;color:#a4a3a3;">184</div>
<div class="code" style="left:78px;top:157px;">        <span class="k">if </span>(transformation != <span class="k">null </span>&amp;&amp; !transformation.equals(<span class="s">""</span>)) {<span class="i" style="color:#7d8b99;margin-left:4px;">  transformation: "AES"</span></div>
<div class="ln" style="left:0;top:180px;color:#606366;">185</div>
<div class="code" style="left:78px;top:179px;">            List&lt;Cipher.Transform&gt; transforms = <span class="i">getTransforms</span>(transformation)<span class="k">;</span></div>
<div class="ln" style="left:0;top:202px;color:#606366;">186</div>
<div class="code" style="left:78px;top:201px;">            List&lt;ServiceId&gt; cipherServices = <span class="k">new </span>ArrayList(transforms.size())<span class="k">;</span></div>
<div class="ln" style="left:0;top:224px;color:#606366;">187</div>
<div class="code" style="left:78px;top:223px;">            Iterator var3 = transforms.iterator()<span class="k">;</span></div>
<div class="ln" style="left:0;top:246px;color:#606366;">188</div>
<div class="ln" style="left:0;top:268px;color:#606366;">189</div>
<div class="code" style="left:78px;top:267px;">            <span class="k">while</span>(var3.hasNext()) {</div>
<div class="ln" style="left:0;top:290px;color:#606366;">190</div>
<div class="code" style="left:78px;top:289px;">                Cipher.Transform transform = (Cipher.Transform)var3.next()<span class="k">;</span></div>
<div class="ln" style="left:0;top:312px;color:#606366;">191</div>
<div class="code" style="left:78px;top:311px;">                cipherServices.add(<span class="k">new </span>ServiceId(<span class="hint">type:</span><span class="s">"Cipher"</span><span class="k">, </span>transform.<span class="f">transform</span>))<span class="k">;</span></div>
<div class="ln" style="left:0;top:334px;color:#606366;">192</div>
<div class="code" style="left:78px;top:333px;">            }</div>
<div class="ln" style="left:0;top:356px;color:#606366;">193</div>
<div class="ln" style="left:0;top:378px;color:#606366;">194</div>
<div class="code" style="left:78px;top:377px;">            List&lt;Service&gt; services = GetInstance.<span class="i">getServices</span>(cipherServices)<span class="k">;</span></div>
<div class="ln" style="left:0;top:400px;color:#606366;">195</div>
<div class="code" style="left:78px;top:399px;">            Iterator&lt;Service&gt; t = services.iterator()<span class="k">;</span></div>
<div class="ln" style="left:0;top:422px;color:#606366;">196</div>
<div class="code" style="left:78px;top:421px;">            Exception <span class="u">failure</span> = <span class="k">null;</span></div>
<div class="ln" style="left:0;top:444px;color:#606366;">197</div>
<svg style="left:68px;top:28px" width="9" height="12" viewBox="0 0 9 12"><path d="M0.5 11.5v-6.5l4-4.5l4 4.5v6.5z" fill="#2b2b2b" stroke="#5e6062" stroke-width="1"/><path d="M2 7h5" stroke="#606366" stroke-width="1"/></svg>
<svg style="left:68px;top:94px" width="9" height="12" viewBox="0 0 9 12"><path d="M0.5 11.5v-6.5l4-4.5l4 4.5v6.5z" fill="#2b2b2b" stroke="#5e6062" stroke-width="1"/><path d="M2 7h5" stroke="#606366" stroke-width="1"/></svg>
<svg style="left:68px;top:336px" width="9" height="12" viewBox="0 0 9 12"><path d="M0.5 11.5v-6.5l4-4.5l4 4.5v6.5z" fill="#2b2b2b" stroke="#5e6062" stroke-width="1"/><path d="M2 7h5" stroke="#606366" stroke-width="1"/></svg>
<svg style="left:68px;top:141px" width="9" height="11" viewBox="0 0 9 11"><path d="M0.5 0.5v6l4 4l4-4v-6z" fill="#2b2b2b" stroke="#5e6062" stroke-width="1"/><path d="M2 4h5" stroke="#606366" stroke-width="1"/></svg>
<svg style="left:68px;top:163px" width="9" height="11" viewBox="0 0 9 11"><path d="M0.5 0.5v6l4 4l4-4v-6z" fill="#2b2b2b" stroke="#5e6062" stroke-width="1"/><path d="M2 4h5" stroke="#606366" stroke-width="1"/></svg>
<svg style="left:68px;top:141px" width="9" height="11" viewBox="0 0 9 11"><path d="M0.5 0.5v6l4 4l4-4v-6z" fill="#2b2b2b" stroke="#5e6062" stroke-width="1"/><path d="M2 4h5" stroke="#606366" stroke-width="1"/></svg>
<svg style="left:68px;top:273px" width="9" height="11" viewBox="0 0 9 11"><path d="M0.5 0.5v6l4 4l4-4v-6z" fill="#2b2b2b" stroke="#5e6062" stroke-width="1"/><path d="M2 4h5" stroke="#606366" stroke-width="1"/></svg>
<span class="t" style="left:43px;top:137px;width:14px;height:16px;line-height:16px;text-align:center;color:#c4c6c8;font-family:'Liberation Sans',sans-serif;font-size:13px;">@</span>
<svg style="left:43px;top:160px" width="14" height="14" viewBox="0 0 14 14"><path d="M6.9 0L13.8 6.9L6.9 13.8L0 6.9z" fill="#c75450"/></svg>
<div style="position:absolute;left:79px;top:451px;width:790px;height:9px;background:#4e4e4e;"></div>
</div>
<div style="position:absolute;left:17px;top:547px;width:1343px;height:1px;background:#2b2b2b;"></div>
<div style="position:absolute;left:17px;top:548px;width:1343px;height:26px;background:#3c4756;"></div>
<div style="position:absolute;left:17px;top:574px;width:1343px;height:1px;background:#323232;"></div>
<span id="t37" class="t " style="left:23.5px;top:549px;height:26px;line-height:26px;letter-spacing:-0.144px;">Debug:</span>
<svg style="left:85px;top:554px" width="16" height="16" viewBox="0 0 16 16"><path d="M3.5 2.5v-2h10v9h-2" fill="none" stroke="#9aa0a5" stroke-width="1"/><rect x="0.5" y="2.5" width="11" height="9.5" fill="#3c4756" stroke="#9aa0a5" stroke-width="1"/><path d="M3.5 5.5h7M8.5 3.5l2 2l-2 2" fill="none" stroke="#9aa0a5" stroke-width="1"/><rect x="2.2" y="8" width="7.6" height="3" fill="#3a8fae"/><circle cx="13.2" cy="13.2" r="2.6" fill="#3c4756"/><circle cx="13.2" cy="13.2" r="2" fill="#10e010"/></svg>
<span id="t38" class="t " style="left:104.7px;top:549px;height:26px;line-height:26px;letter-spacing:-0.287px;">Remote_Debug</span>
<svg style="left:200px;top:558px" width="8" height="8" viewBox="0 0 8 8"><path d="M0.5 0.5L7.5 7.5M7.5 0.5L0.5 7.5" stroke="#6e7479" stroke-width="1"/></svg>
<div style="position:absolute;left:72px;top:572px;width:147px;height:3px;background:#4a88c7;"></div>
<div style="position:absolute;left:45px;top:575px;width:1px;height:268px;background:#323232;"></div>
<svg style="left:23px;top:581px" width="16" height="16" viewBox="0 0 16 16"><path d="M7.3 13.8A4.2 4.2 0 0 1 7.1 5.4H10.5" fill="none" stroke="#4fa455" stroke-width="2.2"/><path d="M10 1.1l5.3 4l-5.3 4z" fill="#4fa455"/><rect x="8.4" y="9.4" width="6.4" height="6.2" fill="#3c3f41"/><rect x="9" y="10" width="5.2" height="5" fill="#afb1b3"/></svg>
<svg style="left:23px;top:607px" width="16" height="16" viewBox="0 0 16 16"><path d="M1 12.9L7.5 6.4a4.1 4.1 0 0 1 5.2-5.1l-2.6 2.6l0.4 1.9l1.9 0.4l2.6-2.6a4.1 4.1 0 0 1-5.1 5.2L3.4 15.3z" fill="#afb1b3"/></svg>
<div style="position:absolute;left:21px;top:631px;width:20px;height:1px;background:#555555;"></div>
<svg style="left:23px;top:639px" width="16" height="16" viewBox="0 0 16 16"><rect x="2.6" y="2.5" width="3" height="11" fill="#4fa455"/><path d="M7 2.5l8 5.5l-8 5.5z" fill="#4fa455"/></svg>
<svg style="left:23px;top:665px" width="16" height="16" viewBox="0 0 16 16"><rect x="3.8" y="2.5" width="2.8" height="11" fill="#616466"/><rect x="9.5" y="2.5" width="2.8" height="11" fill="#616466"/></svg>
<svg style="left:26px;top:695px" width="10" height="10" viewBox="0 0 10 10"><rect x="0" y="0" width="10" height="10" fill="#c75450"/></svg>
<div style="position:absolute;left:21px;top:716px;width:20px;height:1px;background:#555555;"></div>
<svg style="left:23px;top:725px" width="16" height="16" viewBox="0 0 16 16"><circle cx="10.8" cy="5.2" r="4.1" fill="#cc5050"/><circle cx="6.2" cy="9.8" r="4.7" fill="#cc5050" stroke="#3c3f41" stroke-width="1"/></svg>
<svg style="left:23px;top:751px" width="16" height="16" viewBox="0 0 16 16"><circle cx="8" cy="8" r="5" fill="#cc5050"/><path d="M2 14L14 2" stroke="#3c3f41" stroke-width="3"/><path d="M2.2 13.8L13.8 2.2" stroke="#afb1b3" stroke-width="1.3"/></svg>
<div style="position:absolute;left:21px;top:775px;width:20px;height:1px;background:#555555;"></div>
<svg style="left:23px;top:784px" width="16" height="16" viewBox="0 0 16 16"><path d="M1 4.5h3.2l1.3-2h5l1.3 2h3.2v9h-14z M8 6a3 3 0 1 0 0 6a3 3 0 1 0 0-6z M8 7.3a1.7 1.7 0 1 1 0 3.4a1.7 1.7 0 1 1 0-3.4z" fill="#afb1b3" fill-rule="evenodd"/></svg>
<div style="position:absolute;left:21px;top:808px;width:20px;height:1px;background:#555555;"></div>
<svg style="left:23px;top:817px" width="16" height="16" viewBox="0 0 16 16"><path d="M6.38 3.69L6.71 1.63L9.29 1.63L9.62 3.69L10.92 4.44L12.87 3.70L14.16 5.93L12.54 7.25L12.54 8.75L14.16 10.07L12.87 12.30L10.92 11.56L9.62 12.31L9.29 14.37L6.71 14.37L6.38 12.31L5.08 11.56L3.13 12.30L1.84 10.07L3.46 8.75L3.46 7.25L1.84 5.93L3.13 3.70L5.08 4.44Z M8 6.1a1.9 1.9 0 1 0 0 3.8a1.9 1.9 0 1 0 0-3.8z" fill="#afb1b3" fill-rule="evenodd" stroke="#afb1b3" stroke-width="0.6" stroke-linejoin="round"/></svg>
<svg style="left:34px;top:831px" width="6" height="4"><path d="M0 0h6l-3 3.5z" fill="#afb1b3"/></svg>
<div style="position:absolute;left:21px;top:841px;width:20px;height:1px;background:#555555;"></div>
<div style="position:absolute;left:46px;top:602px;width:1314px;height:1px;background:#323232;"></div>
<span id="t39" class="t " style="left:59.2px;top:576px;height:26px;line-height:26px;letter-spacing:0.241px;font-size:11.5px;">Debugger</span>
<div style="position:absolute;left:46px;top:601px;width:78px;height:2px;background:#4a88c7;"></div>
<svg style="left:137px;top:584px" width="12" height="10" viewBox="0 0 12 10"><rect x="0" y="0" width="12" height="10" fill="#afb1b3"/><path d="M3.2 2L6.4 5L3.2 8" fill="none" stroke="#3c3f41" stroke-width="1.7"/></svg>
<span id="t40" class="t " style="left:155px;top:576px;height:26px;line-height:26px;letter-spacing:-0.001px;font-size:11.5px;">Console</span>
<svg style="left:212px;top:583px" width="12" height="11" viewBox="0 0 12 11"><rect x="0" y="0" width="12" height="2" fill="#afb1b3"/><rect x="0" y="4" width="12" height="3" fill="#389fd6"/><rect x="0" y="9" width="12" height="2" fill="#afb1b3"/></svg>
<div style="position:absolute;left:234px;top:578px;width:1px;height:20px;background:#555555;"></div>
<svg style="left:243px;top:580px" width="16" height="16" viewBox="0 0 16 16"><path d="M1.2 7.8L6 3l4.6 4.6" fill="none" stroke="#389fd6" stroke-width="2"/><path d="M7.6 9.6h6v-6z" fill="#389fd6"/><rect x="2" y="12.6" width="12" height="1.6" fill="#afb1b3"/></svg>
<svg style="left:269px;top:580px" width="16" height="16" viewBox="0 0 16 16"><path d="M8 0.8v6" stroke="#389fd6" stroke-width="2"/><path d="M3.3 5.6h9.4l-4.7 5.2z" fill="#389fd6"/><rect x="2" y="12.6" width="12" height="1.6" fill="#afb1b3"/></svg>
<svg style="left:295px;top:580px" width="16" height="16" viewBox="0 0 16 16"><path d="M8 0.8v6" stroke="#db5860" stroke-width="2"/><path d="M3.3 5.6h9.4l-4.7 5.2z" fill="#db5860"/><rect x="2" y="12.6" width="12" height="1.6" fill="#afb1b3"/></svg>
<svg style="left:321px;top:580px" width="16" height="16" viewBox="0 0 16 16"><path d="M8 5v6" stroke="#389fd6" stroke-width="2"/><path d="M3.3 6.4h9.4l-4.7-5.2z" fill="#389fd6"/><rect x="2" y="12.6" width="12" height="1.6" fill="#afb1b3"/></svg>
<svg style="left:347px;top:580px" width="16" height="16" viewBox="0 0 16 16"><path d="M1 1l5.6 5.6M6.6 1l-5.6 5.6" stroke="#cc5050" stroke-width="2.1"/><path d="M8 5.4h5.6v8h-8v-5.4" fill="none" stroke="#afb1b3" stroke-width="1.9"/></svg>
<svg style="left:374px;top:580px" width="16" height="16" viewBox="0 0 16 16"><path d="M1.5 1.5l6 6" stroke="#389fd6" stroke-width="1.8"/><path d="M3.4 9h5.6v-5.6z" fill="#389fd6"/><path d="M10 7.5h1.4h1.4M10 15.5h2.8M11.4 7.5v8" stroke="#afb1b3" stroke-width="1" fill="none"/></svg>
<div style="position:absolute;left:397px;top:578px;width:1px;height:20px;background:#555555;"></div>
<svg style="left:406px;top:580px" width="16" height="16" viewBox="0 0 16 16"><path d="M2 2h12v12h-12z M4 4v2h8v-2z M4 7.3v2h2v-2z M7 7.3v2h2v-2z M10 7.3v2h2v-2z M4 10.4v2h2v-2z M7 10.4v2h2v-2z M10 10.4v2h2v-2z" fill="#afb1b3" fill-rule="evenodd"/></svg>
<svg style="left:432px;top:580px" width="16" height="16" viewBox="0 0 16 16"><rect x="2" y="3.1" width="4.8" height="1.8" fill="#606365"/><rect x="9" y="3.1" width="5" height="1.8" fill="#606365"/><rect x="2" y="7.1" width="4.8" height="1.8" fill="#606365"/><rect x="9" y="7.1" width="5" height="1.8" fill="#606365"/><rect x="2" y="11.1" width="4.8" height="1.8" fill="#606365"/><rect x="9" y="11.1" width="5" height="1.8" fill="#606365"/><path d="M6.3 8.6C8 8.6 7.6 4 9.4 4" stroke="#606365" stroke-width="0.9" fill="none"/></svg>
<div style="position:absolute;left:46px;top:629px;width:1314px;height:1px;background:#323232;"></div>
<div style="position:absolute;left:415px;top:603px;width:1px;height:240px;background:#323232;"></div>
<span id="t41" class="t " style="left:59.2px;top:603px;height:26px;line-height:26px;letter-spacing:-0.457px;font-size:11.5px;">Frames</span>
<span id="t42" class="t " style="left:429.2px;top:603px;height:26px;line-height:26px;letter-spacing:0.013px;font-size:11.5px;">Variables</span>
<div class="ab" style="left:49px;top:633px;width:279px;height:22px;border:1px solid #646464;border-radius:3px;background:#3c3f41;"></div>
<svg style="left:57px;top:638px" width="15" height="13" viewBox="0 0 15 13"><path d="M0.8 6.6l4 4.4l8.8-9.8" fill="none" stroke="#c9622a" stroke-width="2.3"/></svg>
<span id="t43" class="t " style="left:75.3px;top:635px;height:22px;line-height:22px;letter-spacing:0.074px;">&quot;main&quot;@1 in group &quot;main&quot;: RUNNING</span>
<svg style="left:313.5px;top:642.5px" width="10" height="6"><path d="M0 0h10l-5 5.5z" fill="#9a9da0"/></svg>
<svg style="left:342px;top:638px" width="12" height="14" viewBox="0 0 12 14"><path d="M6 13.5v-12M1.2 6.3L6 1.5l4.8 4.8" fill="none" stroke="#5a5d5f" stroke-width="1.5"/></svg>
<svg style="left:368px;top:638px" width="12" height="14" viewBox="0 0 12 14"><path d="M6 0.5v12M1.2 7.7L6 12.5l4.8-4.8" fill="none" stroke="#afb1b3" stroke-width="1.5"/></svg>
<svg style="left:393px;top:638px" width="14" height="14" viewBox="0 0 14 14"><path d="M0.5 1h13l-5 6v6h-3v-6z" fill="#afb1b3"/></svg>
<div style="position:absolute;left:46px;top:661px;width:369px;height:182px;background:#4f4b41;"></div>
<div style="position:absolute;left:46px;top:662px;width:369px;height:21px;background:#4b6eaf;"></div>
<div class="ab" style="left:46px;top:661px;width:369px;height:182px;overflow:hidden;">
<span id="t44" class="t " style="left:16.4px;top:1px;height:21px;line-height:21px;letter-spacing:-0.054px;color:#ccd3e0;">getInstance:525, Cipher <span class="i">(javax.crypto)</span></span>
<span id="t45" class="t fr" style="left:16.4px;top:22px;height:21px;line-height:21px;letter-spacing:0.031px;">decrypt:55, XJdkDecryptor <span class="i">(io.xjar)</span></span>
<span id="t46" class="t fr" style="left:16.4px;top:43px;height:21px;line-height:21px;letter-spacing:-0.006px;">getInputStream:160, XBootURLConnection <span class="i">(io.xjar.boot)</span></span>
<span id="t47" class="t fr" style="left:16.4px;top:64px;height:21px;line-height:21px;letter-spacing:-0.142px;">openStream:1140, URL <span class="i">(java.net)</span></span>
<span id="t48" class="t fr" style="left:16.4px;top:85px;height:21px;line-height:21px;letter-spacing:-0.020px;">findClass:65, XBootClassLoader <span class="i">(io.xjar.boot)</span></span>
<span id="t49" class="t fr" style="left:16.4px;top:106px;height:21px;line-height:21px;letter-spacing:-0.155px;">loadClass:588, ClassLoader <span class="i">(java.lang)</span></span>
<span id="t50" class="t fr" style="left:16.4px;top:127px;height:21px;line-height:21px;letter-spacing:-0.256px;">loadClass:151, LaunchedURLClassLoader <span class="i">(org.springframework.boot.loader)</span></span>
<span id="t51" class="t fr" style="left:16.4px;top:148px;height:21px;line-height:21px;letter-spacing:-0.155px;">loadClass:521, ClassLoader <span class="i">(java.lang)</span></span>
<span id="t52" class="t fr" style="left:16.4px;top:169px;height:21px;line-height:21px;letter-spacing:-0.090px;">forName0:-1, Class <span class="i">(java.lang)</span></span>
</div>
<div style="position:absolute;left:406px;top:661px;width:9px;height:182px;background:rgba(166,166,166,0.28);"></div>
<div style="position:absolute;left:440px;top:630px;width:1px;height:213px;background:#323232;"></div>
<svg style="left:423px;top:638px" width="10" height="10" viewBox="0 0 10 10"><path d="M5 0v10M0 5h10" stroke="#d0d2d4" stroke-width="2"/></svg>
<div style="position:absolute;left:423px;top:668px;width:10px;height:2px;background:#5a5d5f;"></div>
<svg style="left:422px;top:691px" width="12" height="7"><path d="M0 7h12l-6-7z" fill="#5a5d5f"/></svg>
<svg style="left:422px;top:717.5px" width="12" height="7"><path d="M0 0h12l-6 7z" fill="#5a5d5f"/></svg>
<svg style="left:421px;top:739.5px" width="14" height="14" viewBox="0 0 14 14"><path d="M1 1h8.5v1.6h-6.9v7.4h-1.6z" fill="#5a5d5f"/><path d="M4 4h9v9.5h-9z M5.8 6.2v1.3h5.4v-1.3z M5.8 8.6v1.3h5.4v-1.3z M5.8 11v1.3h5.4v-1.3z" fill="#5a5d5f" fill-rule="evenodd"/></svg>
<div style="position:absolute;left:417px;top:762px;width:22px;height:22px;background:#5c6164;border-radius:3px;"></div>
<svg style="left:420px;top:768px" width="16" height="10" viewBox="0 0 16 10"><rect x="0.8" y="2.3" width="6.3" height="6" rx="2.8" ry="2.9" fill="none" stroke="#d0d2d4" stroke-width="1.6"/><rect x="9.1" y="2.3" width="6.3" height="6" rx="2.8" ry="2.9" fill="none" stroke="#d0d2d4" stroke-width="1.6"/><path d="M6.6 3.6h3" stroke="#d0d2d4" stroke-width="1.7"/></svg>
<div style="position:absolute;left:441px;top:630px;width:919px;height:20px;background:#0d293e;"></div>
<svg style="left:448px;top:633.5px" width="8" height="12" viewBox="0 0 8 12"><path d="M2.2 1.5L6.6 6L2.2 10.5" fill="none" stroke="#a7abae" stroke-width="1.4"/></svg>
<svg style="left:448px;top:653.5px" width="8" height="12" viewBox="0 0 8 12"><path d="M2.2 1.5L6.6 6L2.2 10.5" fill="none" stroke="#a7abae" stroke-width="1.4"/></svg>
<svg style="left:465px;top:632px" width="16" height="16" viewBox="0 0 16 16"><circle cx="8" cy="8" r="7" fill="#b98a3c"/><text x="8" y="11.3" text-anchor="middle" font-family="Liberation Sans" font-size="10.5" fill="#3b2d12">s</text></svg>
<svg style="left:465px;top:652px" width="16" height="16" viewBox="0 0 16 16"><circle cx="8" cy="8" r="7" fill="#b98a3c"/><text x="8" y="11.3" text-anchor="middle" font-family="Liberation Sans" font-size="10.5" fill="#3b2d12">p</text></svg>
<span id="t53" class="t " style="left:484.3px;top:630.6px;height:20px;line-height:20px;letter-spacing:-0.035px;color:#e6e8ea;">static<span style="color:#8a9299;"> members of Cipher</span></span>
<span id="t54" class="t " style="left:484.6px;top:650px;height:20px;line-height:20px;letter-spacing:0.193px;color:#e27f7f;">transformation</span>
<span id="t55" class="t " style="left:575px;top:650px;height:20px;line-height:20px;">=</span>
<span id="t56" class="t " style="left:587.6px;top:650px;height:20px;line-height:20px;letter-spacing:-1.000px;color:#67905a;">&quot;AES&quot;</span>
<div class="ab" style="left:446px;top:638px;width:182px;height:41px;border:2px solid #e8161e;"></div>
</body></html>
